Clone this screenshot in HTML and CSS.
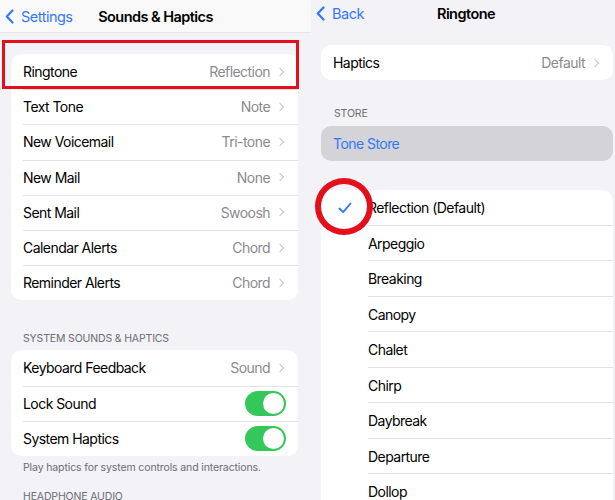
FILE: index.html
```html
<!DOCTYPE html>
<html lang="en">
<head>
    <meta charset="UTF-8">
    <meta name="viewport" content="width=device-width, initial-scale=1.0">
    <title>Ringtone</title>
    <link rel="stylesheet" href="styles.css">
</head>
<body>

    <div class="screens">
        <!-- left: Sounds & Haptics -->
        <div class="screen screen-left">
            <div class="nav nav-left">
                <a class="back" href="#">
                    <svg class="back-icon" width="9" height="15" viewBox="0 0 9 15"><path d="M7.5 1.5 L1.8 7.5 L7.5 13.5" fill="none" stroke="#3478f6" stroke-width="2.2" stroke-linecap="round" stroke-linejoin="round"/></svg>
                    Settings
                </a>
                <h1 class="title">Sounds &amp; Haptics</h1>
            </div>

            <div class="card card-first">
                <div class="row"><span class="label">Ringtone</span><span class="value">Reflection</span><span class="chev"></span></div>
                <div class="row"><span class="label">Text Tone</span><span class="value">Note</span><span class="chev"></span></div>
                <div class="row"><span class="label">New Voicemail</span><span class="value">Tri-tone</span><span class="chev"></span></div>
                <div class="row"><span class="label">New Mail</span><span class="value">None</span><span class="chev"></span></div>
                <div class="row"><span class="label">Sent Mail</span><span class="value">Swoosh</span><span class="chev"></span></div>
                <div class="row"><span class="label">Calendar Alerts</span><span class="value">Chord</span><span class="chev"></span></div>
                <div class="row"><span class="label">Reminder Alerts</span><span class="value">Chord</span><span class="chev"></span></div>
            </div>

            <p class="section-head">System Sounds &amp; Haptics</p>
            <div class="card">
                <div class="row"><span class="label">Keyboard Feedback</span><span class="value">Sound</span><span class="chev"></span></div>
                <div class="row"><span class="label">Lock Sound</span><span class="toggle on"></span></div>
                <div class="row"><span class="label">System Haptics</span><span class="toggle on"></span></div>
            </div>
            <p class="section-foot">Play haptics for system controls and interactions.</p>

            <p class="section-head section-head-2">Headphone Audio</p>

            <div class="mark-box"></div>
        </div>

        <!-- right: Ringtone -->
        <div class="screen screen-right">
            <div class="nav nav-right">
                <a class="back" href="#">
                    <svg class="back-icon" width="9" height="15" viewBox="0 0 9 15"><path d="M7.5 1.5 L1.8 7.5 L7.5 13.5" fill="none" stroke="#3478f6" stroke-width="2.2" stroke-linecap="round" stroke-linejoin="round"/></svg>
                    Back
                </a>
                <h1 class="title">Ringtone</h1>
            </div>

            <div class="card card-haptics">
                <div class="row"><span class="label">Haptics</span><span class="value">Default</span><span class="chev"></span></div>
            </div>

            <p class="section-head">Store</p>
            <div class="card card-store">
                <div class="row"><span class="label link">Tone Store</span></div>
            </div>

            <div class="card card-tones">
                <div class="tone">
                    <span class="check">
                        <svg width="14" height="12" viewBox="0 0 14 12"><path d="M1.5 6.5 L5.2 10.2 L12.5 1.5" fill="none" stroke="#3478f6" stroke-width="1.9" stroke-linecap="round" stroke-linejoin="round"/></svg>
                    </span>
                    <span class="tone-name">Reflection (Default)</span>
                </div>
                <div class="tone"><span class="check"></span><span class="tone-name">Arpeggio</span></div>
                <div class="tone"><span class="check"></span><span class="tone-name">Breaking</span></div>
                <div class="tone"><span class="check"></span><span class="tone-name">Canopy</span></div>
                <div class="tone"><span class="check"></span><span class="tone-name">Chalet</span></div>
                <div class="tone"><span class="check"></span><span class="tone-name">Chirp</span></div>
                <div class="tone"><span class="check"></span><span class="tone-name">Daybreak</span></div>
                <div class="tone"><span class="check"></span><span class="tone-name">Departure</span></div>
                <div class="tone"><span class="check"></span><span class="tone-name">Dollop</span></div>
            </div>

            <div class="mark-circle"></div>
        </div>
    </div>

</body>
</html>
```

FILE: styles.css
```css
* {
    box-sizing: border-box;
}

body {
    margin: 0;
    font-family: Inter, "Noto Sans", sans-serif;
    background-color: #f2f2f7;
    color: #000;
}

.screens {
    display: flex;
    width: 615px;
    height: 500px;
    overflow: hidden;
}

.screen {
    position: relative;
    height: 500px;
    background: #f2f2f7;
    overflow: hidden;
}

.screen-left {
    width: 311px;
    padding-right: 13px;
}

.screen-right {
    width: 304px;
    padding-left: 10px;
    padding-right: 2px;
}

/* nav bars */
.nav {
    display: flex;
    align-items: center;
    position: relative;
}

.nav-left {
    height: 33px;
    margin-right: -13px;
    padding-left: 5px;
    background: #f9f9f9;
    border-bottom: 1px solid #e6e6ea;
}

.nav-right {
    height: 26px;
    margin-left: -10px;
    padding-left: 5px;
}

.back {
    display: flex;
    align-items: center;
    gap: 7px;
    color: #3478f6;
    text-decoration: none;
    font-size: 14.5px;
    letter-spacing: -0.5px;
}

.title {
    position: absolute;
    left: 0;
    right: 0;
    margin: 0;
    text-align: center;
    font-size: 14.5px;
    font-weight: 600;
    letter-spacing: -0.55px;
    pointer-events: none;
}

.nav-right .title {
    left: 8px;
}

/* grouped cards */
.card {
    background: #fff;
    border-radius: 10px;
    margin-left: 11px;
    overflow: hidden;
}

.screen-right .card {
    margin-left: 0;
}

.card-first {
    margin-top: 21px;
}

.row {
    display: flex;
    align-items: center;
    height: 35.2px;
    padding: 0 12px;
    font-size: 14px;
    letter-spacing: -0.55px;
    position: relative;
}

.row + .row::before {
    content: "";
    position: absolute;
    top: 0;
    left: 12px;
    right: 0;
    border-top: 1px solid #e2e2e6;
}

.label {
    flex: 1;
}

.value {
    color: #8a8a8e;
}

.chev {
    width: 6px;
    height: 6px;
    margin-left: 7px;
    margin-right: 3px;
    border-top: 1.5px solid #c4c4c8;
    border-right: 1.5px solid #c4c4c8;
    transform: rotate(45deg);
}

.toggle {
    width: 41px;
    height: 25px;
    border-radius: 13px;
    background: #34c759;
    position: relative;
}

.toggle::after {
    content: "";
    position: absolute;
    top: 2px;
    right: 2px;
    width: 21px;
    height: 21px;
    border-radius: 50%;
    background: #fff;
}

.section-head {
    margin: 32px 0 5px 23px;
    font-size: 10.5px;
    line-height: 13px;
    letter-spacing: -0.15px;
    text-transform: uppercase;
    color: #6d6d72;
}

.section-foot {
    margin: 5px 0 0 23px;
    font-size: 10.5px;
    line-height: 13px;
    letter-spacing: -0.12px;
    color: #6d6d72;
}

.section-head-2 {
    margin-top: 16px;
}

/* right screen */
.card-haptics {
    margin-top: 19px;
}

.screen-right .section-head {
    margin: 27px 0 6px 13px;
}

.card-store {
    background: #d3d3d8;
}

.link {
    color: #3478f6;
}

.card-tones {
    margin-top: 29px;
}

.tone {
    display: flex;
    align-items: center;
    height: 35.5px;
    font-size: 14px;
    letter-spacing: -0.55px;
}

.check {
    width: 47px;
    display: flex;
    justify-content: center;
}

.tone-name {
    flex: 1;
    height: 100%;
    display: flex;
    align-items: center;
    border-bottom: 1px solid #e2e2e6;
}

/* annotation overlays */
.mark-box {
    position: absolute;
    left: 2px;
    top: 40px;
    width: 297px;
    height: 49px;
    border: 3.5px solid #e3101c;
}

.mark-circle {
    position: absolute;
    left: 4px;
    top: 178px;
    width: 58px;
    height: 57px;
    border: 6px solid #e3101c;
    border-radius: 50%;
}
```
